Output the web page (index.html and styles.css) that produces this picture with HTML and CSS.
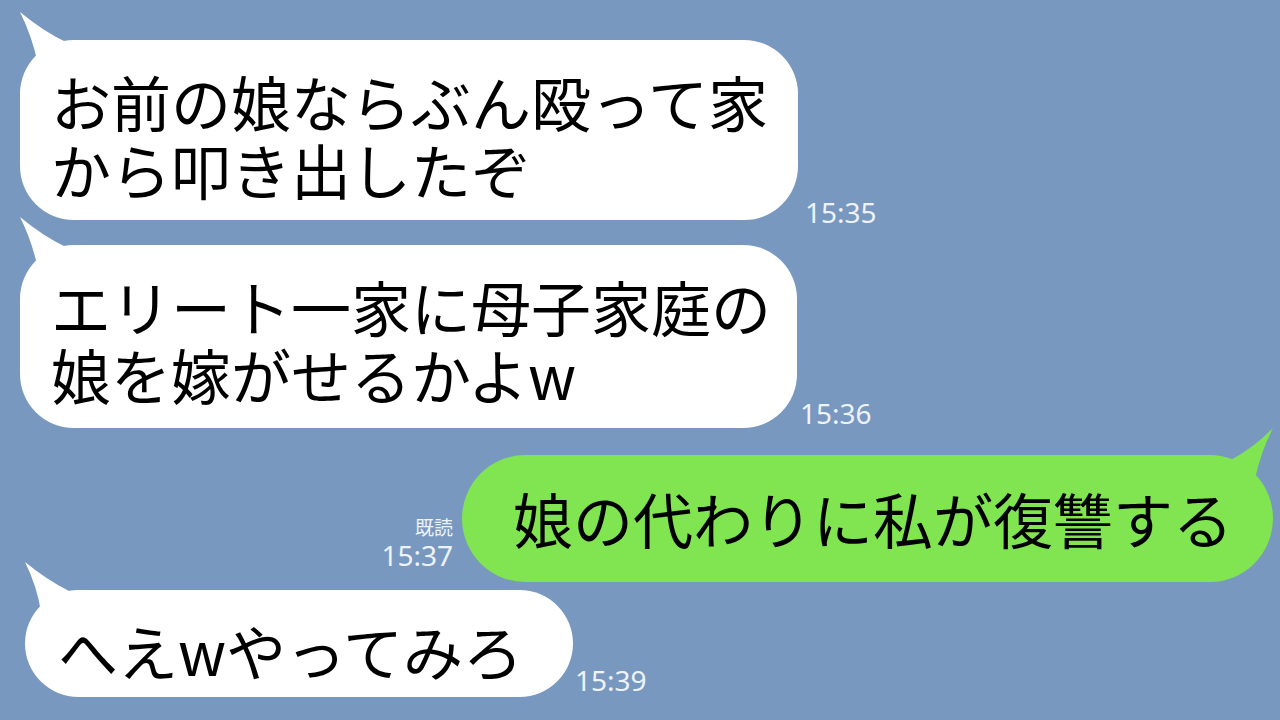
FILE: index.html
```html
<!DOCTYPE html>
<html lang="ja">
<head>
    <meta charset="UTF-8">
    <meta name="viewport" content="width=device-width, initial-scale=1.0">
    <title>トーク</title>
    <link rel="stylesheet" href="styles.css">
</head>
<body>
    <div class="chat">
        <div class="row row-1">
            <div class="bubble white b1">
                <svg class="tail tail-left" width="60" height="60" viewBox="0 0 60 60"><path d="M0,2 Q24,22 48,33 L18,54 Q12,26 0,2 Z"/></svg>
                <p>お前の娘ならぶん殴って家<br>から叩き出したぞ</p>
            </div>
            <span class="time t1">15:35</span>
        </div>

        <div class="row row-2">
            <div class="bubble white b2">
                <svg class="tail tail-left" width="60" height="60" viewBox="0 0 60 60"><path d="M0,2 Q24,22 48,33 L18,54 Q12,26 0,2 Z"/></svg>
                <p>エリート一家に母子家庭の<br>娘を嫁がせるかよw</p>
            </div>
            <span class="time t2">15:36</span>
        </div>

        <div class="row row-3 mine">
            <div class="meta">
                <span class="read">既読</span>
                <span class="time">15:37</span>
            </div>
            <div class="bubble green b3">
                <svg class="tail tail-right" width="60" height="60" viewBox="0 0 60 60"><path d="M60,3 Q42,22 16,36 L42,54 Q48,26 60,3 Z"/></svg>
                <p>娘の代わりに私が復讐する</p>
            </div>
        </div>

        <div class="row row-4">
            <div class="bubble white b4">
                <svg class="tail tail-left" width="60" height="60" viewBox="0 0 60 60"><path d="M0,2 Q22,20 44,31 L16,52 Q12,26 0,2 Z"/></svg>
                <p>へえwやってみろ</p>
            </div>
            <span class="time t4">15:39</span>
        </div>
    </div>
</body>
</html>
```

FILE: styles.css
```css
body {
    margin: 0;
    background-color: #7898c0;
    font-family: "Noto Sans CJK JP", "Noto Sans", sans-serif;
}

.chat {
    width: 1280px;
    height: 720px;
    padding-top: 40px;
    box-sizing: border-box;
    overflow: hidden;
}

.row {
    display: flex;
    align-items: flex-end;
}

.row-1 {
    padding-left: 20px;
}

.row-2 {
    margin-top: 25px;
    padding-left: 20px;
}

.row-3 {
    margin-top: 27px;
}

.row-4 {
    margin-top: 8px;
    padding-left: 25px;
}

.mine {
    justify-content: flex-end;
    padding-right: 7px;
}

.bubble {
    position: relative;
    box-sizing: border-box;
    border-radius: 54px;
}

.bubble p {
    margin: 0;
    font-size: 60px;
    line-height: 68px;
    color: #000;
    white-space: nowrap;
}

.white {
    background-color: #fff;
}

.green {
    background-color: #80e551;
    border-radius: 64px;
}

.tail {
    position: absolute;
    top: -30px;
}

.tail-left {
    left: 0;
}

.white .tail {
    fill: #fff;
}

.tail-right {
    right: 0;
}

.green .tail {
    fill: #80e551;
}

.b1 {
    width: 778px;
    padding: 27px 0 17px 31px;
}

.b2 {
    width: 777px;
    padding: 27px 0 20px 31px;
}

.b3 {
    width: 811px;
    padding: 29px 0 30px 51px;
}

.b4 {
    width: 548px;
    padding: 26px 0 13px 33px;
}

.time {
    font-family: "Noto Sans", sans-serif;
    font-size: 28px;
    line-height: 28px;
    color: #eef3f9;
}

.t1 {
    margin-left: 7px;
    margin-bottom: -6px;
}

.t2 {
    margin-left: 3px;
    margin-bottom: 1px;
}

.t4 {
    margin-left: 2px;
    margin-bottom: 3px;
}

.meta {
    display: flex;
    flex-direction: column;
    align-items: flex-end;
    margin-right: 9px;
    margin-bottom: 13px;
}

.read {
    font-size: 19px;
    line-height: 24px;
    color: #eef3f9;
    margin-bottom: 2px;
}
```
